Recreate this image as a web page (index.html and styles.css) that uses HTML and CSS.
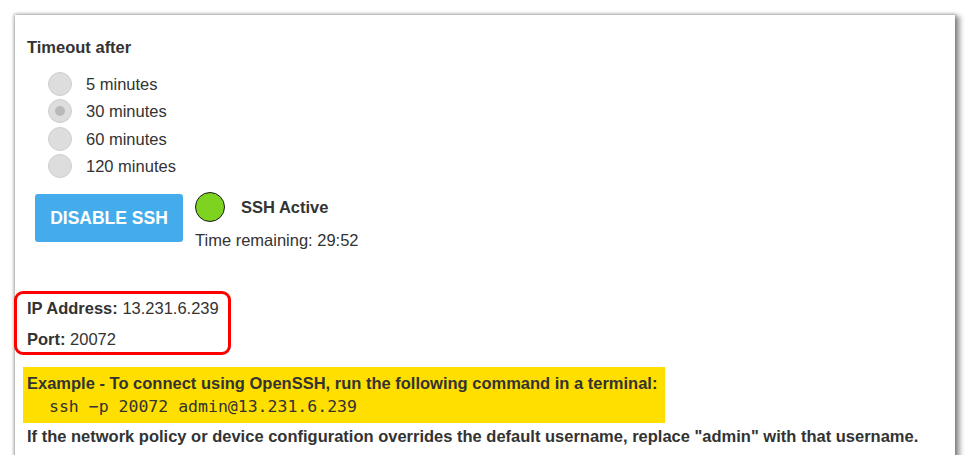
FILE: index.html
```html
<!DOCTYPE html>
<html>
<head>
<meta charset="utf-8">
<link rel="stylesheet" href="styles.css">
</head>
<body>
<div class="panel">
  <div class="heading">Timeout after</div>
  <div class="radios">
    <div class="radio-row"><span class="radio"></span><span class="rlabel">5 minutes</span></div>
    <div class="radio-row"><span class="radio checked"></span><span class="rlabel">30 minutes</span></div>
    <div class="radio-row"><span class="radio"></span><span class="rlabel">60 minutes</span></div>
    <div class="radio-row"><span class="radio"></span><span class="rlabel">120 minutes</span></div>
  </div>
  <div class="action-row">
    <button class="btn">DISABLE SSH</button>
    <div class="status">
      <div class="status-top"><span class="dot"></span><span class="status-text">SSH Active</span></div>
      <div class="remaining">Time remaining: 29:52</div>
    </div>
  </div>
  <div class="conn">
    <div class="conn-line"><b>IP Address:</b> 13.231.6.239</div>
    <div class="conn-line port"><b>Port:</b> 20072</div>
  </div>
  <div class="example">
    <div class="ex-title">Example - To connect using OpenSSH, run the following command in a terminal:</div>
    <div class="cmd">ssh −p 20072 admin@13.231.6.239</div>
  </div>
  <div class="note">If the network policy or device configuration overrides the default username, replace "admin" with that username.</div>
</div>
</body>
</html>
```

FILE: styles.css
```css
html, body {
  margin: 0;
  padding: 0;
  background: #fff;
}
body {
  font-family: "Liberation Sans", Arial, sans-serif;
  color: #333;
  font-size: 16.5px;
  padding: 15px 0 0 15px;
}
.panel {
  width: 940px;
  height: 440px;
  box-sizing: border-box;
  background: #fff;
  box-shadow: 0 0 3px 1px rgba(0,0,0,0.25), 3px 3px 5px 2px rgba(0,0,0,0.38);
  padding: 23px 0 0 12px;
}
.heading {
  font-weight: bold;
  line-height: 18px;
}
.radios {
  margin-top: 14px;
  padding-left: 21px;
}
.radio-row {
  display: flex;
  align-items: center;
  height: 27.5px;
  line-height: 18px;
}
.radio {
  width: 22px;
  height: 22px;
  border-radius: 50%;
  background: #ddd;
  border: 1px solid #cfcfcf;
  display: flex;
  align-items: center;
  justify-content: center;
}
.radio.checked::after {
  content: "";
  width: 10px;
  height: 10px;
  border-radius: 50%;
  background: #b9b9b9;
}
.rlabel {
  margin-left: 14px;
}
.action-row {
  display: flex;
  margin-top: 12px;
  margin-left: 8px;
  align-items: flex-start;
}
.btn {
  width: 148px;
  height: 48px;
  margin-top: 2px;
  border: 0;
  border-radius: 3px;
  background: #45acec;
  color: #fff;
  font-family: "Liberation Sans", Arial, sans-serif;
  font-weight: bold;
  font-size: 17.5px;
  padding: 0;
}
.status {
  margin-left: 12px;
}
.status-top {
  display: flex;
  align-items: center;
  line-height: 18px;
}
.dot {
  width: 28px;
  height: 28px;
  border-radius: 50%;
  background: #7ed321;
  border: 1px solid #1a1a1a;
}
.status-text {
  font-weight: bold;
  margin-left: 16px;
}
.remaining {
  margin-top: 8px;
  line-height: 20px;
}
.conn {
  margin-top: 41px;
  margin-left: -13px;
  width: 201px;
  height: 53px;
  border: 3px solid #f00;
  border-radius: 9px;
  padding: 5px 0 0 10px;
  box-sizing: content-box;
}
.conn-line {
  line-height: 18px;
}
.conn-line.port {
  margin-top: 13px;
}
.example {
  margin-top: 12px;
  margin-left: -4px;
  width: 642px;
  height: 56px;
  box-sizing: border-box;
  background: #ffdf00;
  padding: 7px 0 0 4px;
}
.ex-title {
  font-weight: bold;
  line-height: 18px;
}
.cmd {
  font-family: "DejaVu Sans Mono", monospace;
  font-size: 16.5px;
  margin-top: 5px;
  margin-left: 22px;
  line-height: 20px;
}
.note {
  font-weight: bold;
  margin-top: 4px;
  line-height: 18px;
}
```
